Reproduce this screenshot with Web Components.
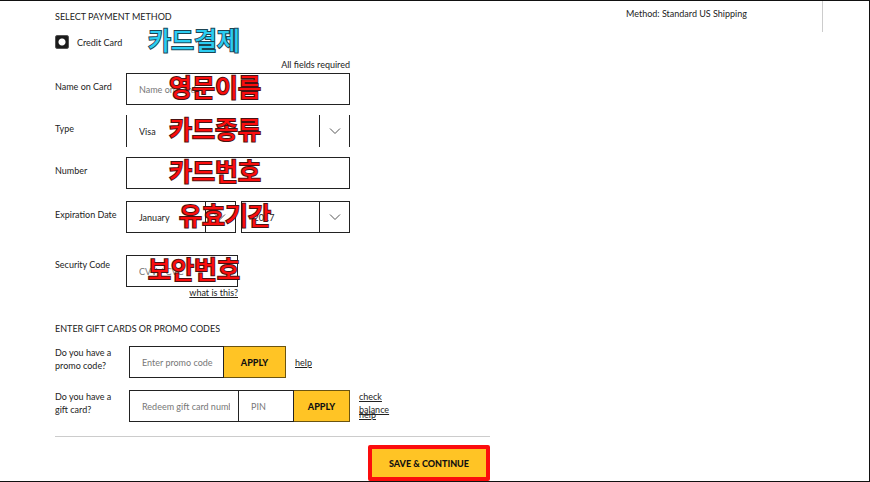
<!DOCTYPE html>
<html lang="en">
<head>
<meta charset="utf-8">
<meta name="viewport" content="width=device-width, initial-scale=1">
<title>Checkout - Payment</title>
<style>
  body {
    margin: 0;
    background: #fff;
    color: #222;
    font: 9px/13px Lato, "Noto Sans CJK KR", sans-serif;
  }
</style>
</head>
<body>
<checkout-page>
  <payment-form></payment-form>
  <order-summary slot="aside">Method: Standard US Shipping</order-summary>
</checkout-page>

<template id="checkout-page">
  <style>
    :host {
      display: grid;
      grid-template-columns: minmax(0, 435px) minmax(0, 197px);
      justify-content: space-between;
      align-items: start;
      box-sizing: border-box;
      min-height: 100vh;
      padding: 0 46px 0 55px;
      border: solid #111;
      border-width: 1px 1px 1px 0;
    }
  </style>
  <slot></slot>
  <slot name="aside"></slot>
</template>

<template id="order-summary">
  <style>
    :host {
      display: block;
      box-sizing: border-box;
      min-height: 31px;
      padding-top: 6px;
      border-right: 1px solid #ccc;
    }
  </style>
  <slot></slot>
</template>

<template id="field-row">
  <style>
    :host {
      display: grid;
      grid-template-columns: var(--label-width, 71px) 1fr;
      position: relative;
      margin-top: 10px;
    }
    .label { padding-top: var(--label-top, 7px); }
    .controls {
      display: flex;
      align-items: flex-start;
      gap: var(--control-gap, 0);
    }
  </style>
  <div class="label"><slot name="label"></slot></div>
  <div class="controls"><slot></slot></div>
  <slot name="note"></slot>
</template>

<template id="select-box">
  <style>
    :host {
      display: grid;
      grid-template-columns: 1fr 30px;
      box-sizing: border-box;
      height: 32px;
      border: 1px solid #222;
    }
    :host([open-frame]) {
      border-color: transparent #222;
      border-width: 0 1px;
    }
    ::slotted(select) {
      grid-area: 1 / 1 / 2 / 3;
    }
    .arrow {
      grid-area: 1 / 2;
      display: flex;
      align-items: center;
      justify-content: center;
      border-left: 1px solid #222;
      pointer-events: none;
    }
  </style>
  <slot></slot>
  <span class="arrow">
    <svg width="12" height="8" viewBox="0 0 12 8" fill="none" stroke="#555"><path d="M1 1.5l5 5 5-5"/></svg>
  </span>
</template>

<template id="callout-note">
  <style>
    :host {
      position: absolute;
      top: -3px;
      left: var(--x, 114px);
      color: #fb0d0d;
      font: 500 25px/32px "Noto Sans CJK KR", sans-serif;
      white-space: nowrap;
      -webkit-text-stroke: 2px #4a1212;
      paint-order: stroke fill;
      stroke-linejoin: round;
      pointer-events: none;
    }
    :host([tone="blue"]) {
      color: #2ccdf2;
      -webkit-text-stroke-color: #1c4452;
    }
  </style>
  <slot></slot>
</template>

<template id="payment-form">
  <style>
    :host { display: block; padding-top: 9px; }
    form { margin: 0; }
    h2 { margin: 0; font: inherit; }
    .method {
      display: flex;
      align-items: center;
      gap: 8px;
      position: relative;
      height: 14px;
      margin-top: 12px;
    }
    .method callout-note { top: -12px; }
    input[type="radio"] {
      appearance: none;
      box-sizing: border-box;
      width: 14px;
      height: 14px;
      margin: 0;
      border: 1px solid #555;
      border-radius: 2px;
      background: radial-gradient(circle, #fff 3px, #1b1b1b 4px);
    }
    .fields { width: 295px; max-width: 100%; }
    .required { margin: 9px 0 0; text-align: right; }
    .required + field-row { margin-top: 2px; }
    input[type="text"], select {
      box-sizing: border-box;
      min-width: 0;
      height: 32px;
      margin: 0;
      padding: 0 12px;
      border: 1px solid #222;
      border-radius: 0;
      background: #fff;
      color: #222;
      font: inherit;
    }
    input::placeholder { color: #777; opacity: 1; }
    input.wide { width: 100%; }
    select {
      appearance: none;
      width: 100%;
      height: 100%;
      border: 0;
    }
    select-box { flex: 1; }
    .expiry { --control-gap: 5px; margin-top: 12px; }
    .security { --label-top: 3px; margin-top: 22px; }
    .cvv { display: grid; width: 112px; justify-items: end; }
    .cvv a { line-height: 11px; }
    a { color: inherit; text-decoration: underline; }
    .codes-title { margin-top: 24px; }
    .code { --label-width: 74px; --label-top: 0; margin-top: 12px; }
    .codes-title + .code { margin-top: 11px; }
    .code label { display: block; width: 64px; }
    .code a { margin-left: 9px; }
    .code input[type="text"] { padding-right: 8px; }
    .promo a { align-self: center; }
    .promo input { width: 95px; }
    .gift .card { width: 110px; }
    .gift .pin { width: 55px; border-left: 0; }
    button {
      box-sizing: border-box;
      height: 32px;
      margin: 0;
      padding: 0;
      border: 1px solid #6b5410;
      background: #ffc425;
      color: #111;
      font: inherit;
      font-weight: 900;
    }
    .promo button { width: 62px; border-left: 0; }
    .gift button { width: 56px; border-left: 0; }
    .links { display: flex; flex-direction: column; align-items: flex-start; width: 42px; }
    .links a + a { margin-top: -8px; }
    .actions {
      display: flex;
      justify-content: flex-end;
      margin-top: 14px;
      padding-top: 8px;
      border-top: 1px solid #ccc;
    }
    .actions button {
      width: 122px;
      height: 36px;
      border: 4px solid #fb0d0d;
      border-radius: 2px;
    }
  </style>
  <form>
    <h2>SELECT PAYMENT METHOD</h2>
    <div class="method">
      <input type="radio" id="credit" name="method" checked>
      <label for="credit">Credit Card</label>
      <callout-note tone="blue" style="--x: 93px">카드결제</callout-note>
    </div>

    <div class="fields">
      <p class="required">All fields required</p>
      <field-row>
        <label slot="label" for="name">Name on Card</label>
        <input class="wide" type="text" id="name" placeholder="Name on Card">
        <callout-note slot="note">영문이름</callout-note>
      </field-row>
      <field-row>
        <label slot="label" for="type">Type</label>
        <select-box open-frame>
          <select id="type"><option>Visa</option></select>
        </select-box>
        <callout-note slot="note">카드종류</callout-note>
      </field-row>
      <field-row>
        <label slot="label" for="number">Number</label>
        <input class="wide" type="text" id="number">
        <callout-note slot="note">카드번호</callout-note>
      </field-row>
      <field-row class="expiry">
        <label slot="label" for="month">Expiration Date</label>
        <select-box>
          <select id="month"><option>January</option></select>
        </select-box>
        <select-box>
          <select id="year" aria-label="Expiration year"><option>2017</option></select>
        </select-box>
        <callout-note slot="note" style="--x: 124px">유효기간</callout-note>
      </field-row>
      <field-row class="security">
        <label slot="label" for="cvv">Security Code</label>
        <div class="cvv">
          <input class="wide" type="text" id="cvv" placeholder="CVV / CVC">
          <a href="#cvv-info">what is this?</a>
        </div>
        <callout-note slot="note" style="--x: 93px">보안번호</callout-note>
      </field-row>
    </div>

    <h2 class="codes-title">ENTER GIFT CARDS OR PROMO CODES</h2>
    <field-row class="code promo">
      <label slot="label" for="promo">Do you have a promo code?</label>
      <input type="text" id="promo" placeholder="Enter promo code">
      <button type="button">APPLY</button>
      <a href="#promo-help">help</a>
    </field-row>
    <field-row class="code gift">
      <label slot="label" for="gift">Do you have a gift card?</label>
      <input class="card" type="text" id="gift" placeholder="Redeem gift card number">
      <input class="pin" type="text" placeholder="PIN" aria-label="PIN">
      <button type="button">APPLY</button>
      <div class="links">
        <a href="#balance">check balance</a>
        <a href="#gift-help">help</a>
      </div>
    </field-row>

    <div class="actions">
      <button type="submit">SAVE &amp; CONTINUE</button>
    </div>
  </form>
</template>

<script>
class TemplateElement extends HTMLElement {
  constructor() {
    super();
    const template = document.getElementById(this.localName);
    this.attachShadow({ mode: 'open' });
    this.shadowRoot.appendChild(document.importNode(template.content, true));
  }
}

customElements.define('callout-note', class extends TemplateElement {});
customElements.define('select-box', class extends TemplateElement {});
customElements.define('field-row', class extends TemplateElement {});
customElements.define('order-summary', class extends TemplateElement {});
customElements.define('payment-form', class extends TemplateElement {});
customElements.define('checkout-page', class extends TemplateElement {});
</script>
</body>
</html>
